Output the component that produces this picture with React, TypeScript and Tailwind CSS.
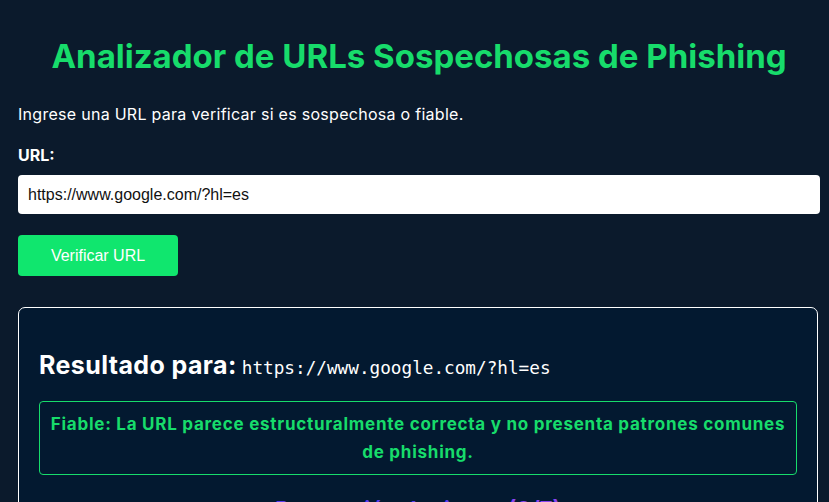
import React from "react";

export default function App() {
  const url = "https://www.google.com/?hl=es";
  return (
    <div
      className="min-h-[502px] w-full bg-[#0b1a2c] text-white overflow-hidden"
      style={{ fontFamily: "Inter, 'Noto Sans', sans-serif" }}
    >
      <div className="pl-[18px] pr-[9px]">
        <h1 className="pt-[37px] text-center text-[33px] leading-[38px] font-bold text-[#17dc6b]">
          Analizador de URLs Sospechosas de Phishing
        </h1>
        <p className="mt-[27px] text-[16px] leading-[24px] tracking-[0.28px] text-white">
          Ingrese una URL para verificar si es sospechosa o fiable.
        </p>
        <label className="mt-[17px] block text-[16px] leading-[24px] font-bold text-white">URL:</label>
        <div className="mt-[8px] h-[39px] w-[802px] rounded-[4px] bg-white flex items-center pl-[10px] text-[16px] text-[#111]"
          style={{ fontFamily: "'Liberation Sans', Arial, sans-serif" }}>
          {url}
        </div>
        <button
          className="mt-[21px] h-[41px] w-[160px] rounded-[4px] bg-[#10e66e] text-white text-[16px]"
          style={{ fontFamily: "'Liberation Sans', Arial, sans-serif" }}
        >
          Verificar URL
        </button>
        <div className="mt-[31px] w-[800px] h-[260px] rounded-[7px] border border-white bg-[#031930] px-[20px] pt-[39px]">
          <h2 className="text-[25px] leading-[36px] font-bold tracking-[0.4px] text-white flex items-baseline">
            <span>Resultado para:</span>
            <span className="ml-[5px] text-[17.7px] font-normal tracking-[0px]" style={{ fontFamily: "'DejaVu Sans Mono', monospace" }}>
              {url}
            </span>
          </h2>
          <div className="mt-[15px] rounded-[4px] border border-[#17dc6b] px-[8px] py-[8px] text-center text-[17px] leading-[28px] font-bold tracking-[0.75px] text-[#17dc6b]">
            Fiable: La URL parece estructuralmente correcta y no presenta patrones comunes de phishing.
          </div>
          <h3 className="mt-[18px] text-center text-[22px] leading-[32px] font-bold text-[#5a3cf0]">
            Puntuación de riesgo <span className="text-[#8a45f0]">(0/7)</span>
          </h3>
        </div>
      </div>
    </div>
  );
}
